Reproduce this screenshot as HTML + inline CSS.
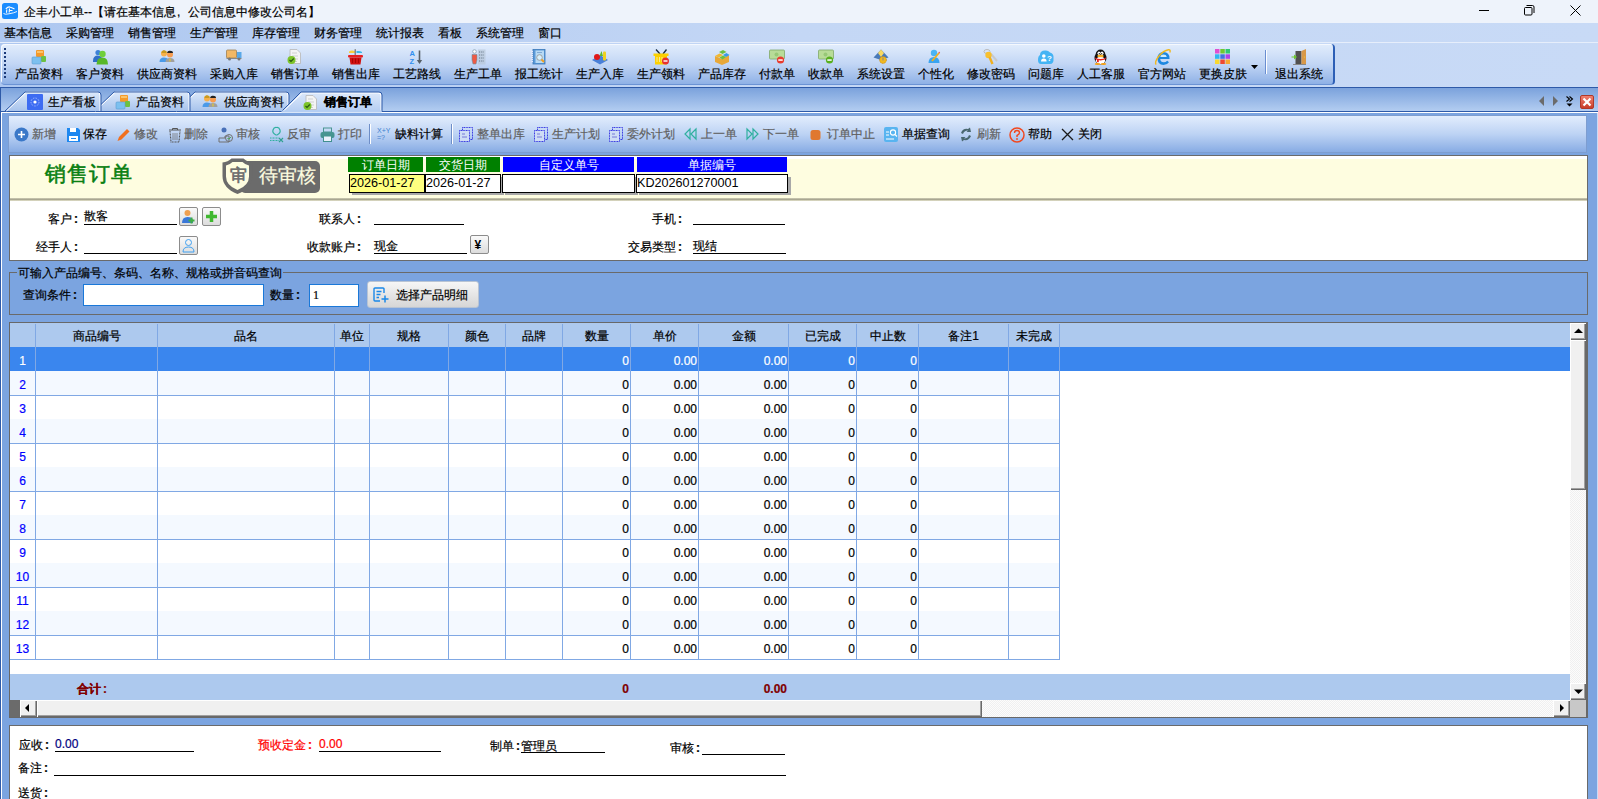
<!DOCTYPE html><html><head><meta charset="utf-8"><style>
*{margin:0;padding:0;box-sizing:border-box}
html,body{width:1598px;height:799px;overflow:hidden}
body{position:relative;background:#7ba4e0;font-family:"Liberation Sans",sans-serif;font-size:12px;line-height:14px;color:#000}
.a{position:absolute}
.t{position:absolute;white-space:nowrap;line-height:14px;-webkit-text-stroke:0.2px currentColor}
.c{display:inline-block;width:12px;padding-left:2px;font-weight:bold;text-align:left}
.cm{display:inline-block;width:12px;padding-left:1px;text-align:left}
.gray{color:#5f5f5f}
svg{position:absolute;overflow:visible}
</style></head><body>
<div class="a" style="left:0;top:0;width:1598px;height:23px;background:#eef3fb"></div>
<div class="a" style="left:2px;top:3px;width:16px;height:16px;background:#1a8cff;border-radius:2.5px"></div>
<svg style="left:2px;top:3px" width="16" height="16"><path d="M3.8 5.8 Q6.5 3.2 8.3 4.2 Q10.5 5 12.5 6" stroke="#fff" stroke-width="1.1" fill="none"/><path d="M4.8 6.5 L4.5 9.8 M7.5 5.5 L7.2 9.5 M8 7.5 H10.5" stroke="#fff" stroke-width="1.1" fill="none"/><path d="M1.5 10.5 Q3 11.8 7 10.8 Q12 10 15 8.5" stroke="#fff" stroke-width="0.9" fill="none"/></svg>
<div class="t " style="left:24px;top:5px;">企丰小工单--【请在基本信息<span class="cm">,</span>公司信息中修改公司名】</div>
<div class="a" style="left:1479px;top:10px;width:10px;height:1px;background:#000"></div>
<svg style="left:1524px;top:5px" width="11" height="11"><rect x="0.5" y="2.5" width="7.5" height="7.5" rx="1" fill="none" stroke="#000" stroke-width="1"/><path d="M2.5 0.5h6a1.5 1.5 0 0 1 1.5 1.5v6" fill="none" stroke="#000" stroke-width="1"/></svg>
<svg style="left:1570px;top:5px" width="11" height="11"><path d="M0.5 0.5L10.5 10.5M10.5 0.5L0.5 10.5" stroke="#000" stroke-width="1"/></svg>
<div class="a" style="left:0;top:23px;width:1598px;height:19px;background:linear-gradient(90deg,#adc7f0,#c4d7f5 50%,#c8daf6)"></div>
<div class="a" style="left:0;top:42px;width:1598px;height:1px;background:#e6eefb"></div>
<div class="t " style="left:4px;top:26px;">基本信息</div>
<div class="t " style="left:66px;top:26px;">采购管理</div>
<div class="t " style="left:128px;top:26px;">销售管理</div>
<div class="t " style="left:190px;top:26px;">生产管理</div>
<div class="t " style="left:252px;top:26px;">库存管理</div>
<div class="t " style="left:314px;top:26px;">财务管理</div>
<div class="t " style="left:376px;top:26px;">统计报表</div>
<div class="t " style="left:438px;top:26px;">看板</div>
<div class="t " style="left:476px;top:26px;">系统管理</div>
<div class="t " style="left:538px;top:26px;">窗口</div>
<div class="a" style="left:0;top:43px;width:1598px;height:44px;background:linear-gradient(90deg,#adc7f0,#c4d7f5 50%,#c8daf6)"></div>
<div class="a" style="left:1px;top:44px;width:1334px;height:41px;border-radius:4px 4px 4px 4px;background:linear-gradient(#e2edfc,#c2d6f5 50%,#8fb1e6);border-right:2px solid #2d5fb6;border-bottom:1px solid #6b93d4;box-shadow:inset 1px 1px 0 #f4f8fe"></div>
<div class="a" style="left:4px;top:48px;width:2px;height:2px;background:#1b3a78"></div>
<div class="a" style="left:4px;top:52px;width:2px;height:2px;background:#1b3a78"></div>
<div class="a" style="left:4px;top:56px;width:2px;height:2px;background:#1b3a78"></div>
<div class="a" style="left:4px;top:60px;width:2px;height:2px;background:#1b3a78"></div>
<div class="a" style="left:4px;top:64px;width:2px;height:2px;background:#1b3a78"></div>
<div class="a" style="left:4px;top:68px;width:2px;height:2px;background:#1b3a78"></div>
<div class="a" style="left:4px;top:72px;width:2px;height:2px;background:#1b3a78"></div>
<div class="a" style="left:4px;top:76px;width:2px;height:2px;background:#1b3a78"></div>
<svg style="left:31px;top:49px" width="16" height="16" viewBox="0 0 16 16"><rect x="5" y="1" width="8" height="7" rx="1" fill="#f59a2a"/><rect x="6" y="2" width="6" height="2" fill="#fbc46a"/><rect x="10" y="7" width="5" height="6" rx="1" fill="#6cc142"/><rect x="1" y="8" width="9" height="7" rx="1" fill="#7cc0ef" stroke="#5a9cd0" stroke-width="0.6"/></svg>
<div class="t " style="left:15px;top:67px;">产品资料</div>
<svg style="left:92px;top:49px" width="16" height="16" viewBox="0 0 16 16"><circle cx="6" cy="3.5" r="2.6" fill="#3c82d8"/><path d="M1 12 Q1 6.5 6 6.5 Q9 6.5 10 9 L9 13 L1 13Z" fill="#3070c8"/><circle cx="10.5" cy="5" r="3.2" fill="#6fcf3a"/><path d="M4.5 15.5 Q4.5 8.5 10.5 8.5 Q16 8.5 16 15.5Z" fill="#58b828"/></svg>
<div class="t " style="left:76px;top:67px;">客户资料</div>
<svg style="left:159px;top:49px" width="16" height="16" viewBox="0 0 16 16"><circle cx="5" cy="4.5" r="3" fill="#f7b04a"/><path d="M4 1.5 Q5 0.5 7.5 2.5 L7.5 4 L2.5 4 Q2.3 2 4 1.5Z" fill="#c89a20"/><path d="M0.5 13 Q0.5 8.5 5 8.5 Q8 8.5 9 10 L9 13Z" fill="#4a9ae8"/><circle cx="11" cy="5.5" r="3" fill="#f79c50"/><path d="M8 4 Q8.5 1.5 11 1.8 Q14 1.8 14 4Z" fill="#222"/><path d="M6.5 13 Q6.5 9 11 9 Q15.5 9 15.5 13Z" fill="#a0a0a0"/><rect x="10.5" y="9.5" width="1" height="3" fill="#f0d020"/></svg>
<div class="t " style="left:137px;top:67px;">供应商资料</div>
<svg style="left:226px;top:49px" width="16" height="16" viewBox="0 0 16 16"><rect x="0.5" y="1" width="10" height="8" rx="1" fill="#f2b866" stroke="#a08050" stroke-width="0.8"/><rect x="11" y="3" width="4.5" height="6" fill="#59a8e8"/><rect x="0.5" y="9" width="15" height="1" fill="#888"/><circle cx="3.5" cy="10" r="1.5" fill="#777"/><circle cx="13" cy="10" r="1.5" fill="#777"/></svg>
<div class="t " style="left:210px;top:67px;">采购入库</div>
<svg style="left:287px;top:49px" width="16" height="16" viewBox="0 0 16 16"><path d="M3 0.5 H10 L13.5 4 V14.5 H3Z" fill="#f4f4f4" stroke="#b8b8b8" stroke-width="0.8"/><path d="M5 4h5M5 7h6M5 10h6M5 12.5h5" stroke="#c8c8c8" stroke-width="0.8"/><circle cx="4.5" cy="11" r="4" fill="#7cc42a"/><path d="M2.5 11 L4 12.5 L6.8 9.5" stroke="#2a5a10" stroke-width="1.2" fill="none"/></svg>
<div class="t " style="left:271px;top:67px;">销售订单</div>
<svg style="left:348px;top:49px" width="16" height="16" viewBox="0 0 16 16"><path d="M1 2.5 Q3 1 7 2 L7 4 L1 4Z" fill="#f7d040"/><path d="M8.5 2 Q12 1.5 14 3 L14 4 L8.5 4Z" fill="#38b8e8"/><rect x="6.5" y="0" width="1.5" height="7" rx="0.7" fill="#888"/><rect x="0" y="6" width="15" height="2.5" rx="1" fill="#e82020"/><path d="M1.5 8.5 H13.5 L12.5 15.5 H2.5Z" fill="#d01010"/><path d="M4.5 9.5v4.5M7.5 9.5v4.5M10.5 9.5v4.5" stroke="#a00000" stroke-width="0.8"/></svg>
<div class="t " style="left:332px;top:67px;">销售出库</div>
<svg style="left:409px;top:49px" width="16" height="16" viewBox="0 0 16 16"><text x="0.5" y="7" font-family="Liberation Sans" font-weight="bold" font-size="7.5" fill="#2f8ff0">A</text><text x="0.5" y="15" font-family="Liberation Sans" font-weight="bold" font-size="7.5" fill="#2f8ff0">Z</text><path d="M10.5 1.5 V13" stroke="#555f66" stroke-width="1.6"/><path d="M7.8 11 L10.5 15 L13.2 11Z" fill="#555f66"/></svg>
<div class="t " style="left:393px;top:67px;">工艺路线</div>
<svg style="left:470px;top:49px" width="16" height="16" viewBox="0 0 16 16"><circle cx="4.5" cy="2.5" r="1.8" fill="#fff" stroke="#8aa0b0" stroke-width="0.8"/><path d="M2 5.5 H7 V11 L6 15 H3 L2 11Z" fill="#ee5a44" stroke="#7090a0" stroke-width="0.6"/><rect x="8" y="0.5" width="7.5" height="15" fill="#b8c8d8" opacity="0.7"/><path d="M9 3h5M9 6h5M9 9h5M9 12h5" stroke="#405060" stroke-width="0.7" stroke-dasharray="1.2 1"/></svg>
<div class="t " style="left:454px;top:67px;">生产工单</div>
<svg style="left:531px;top:49px" width="16" height="16" viewBox="0 0 16 16"><rect x="2" y="0.5" width="12" height="14.5" fill="#5c9ad8" stroke="#3a78b8" stroke-width="0.8"/><rect x="4.5" y="1.5" width="8.5" height="12.5" fill="#b8daf4"/><path d="M1.2 2v11" stroke="#eef" stroke-width="1.4" stroke-dasharray="1 1"/><path d="M6 3.5h5" stroke="#5c8ac0" stroke-width="0.6"/><circle cx="8.5" cy="8.5" r="2.8" fill="#d8f0fc" stroke="#9a9a9a" stroke-width="0.9"/><path d="M10.5 10.5 L13 13" stroke="#f0a020" stroke-width="2"/></svg>
<div class="t " style="left:515px;top:67px;">报工统计</div>
<svg style="left:592px;top:49px" width="16" height="16" viewBox="0 0 16 16"><path d="M0 11 L8 6 L16 11 L8 15.5Z" fill="#4a80d8"/><circle cx="5" cy="8" r="3" fill="#e01818"/><path d="M7.5 7 L9.5 2 L11 7Z" fill="#5ab830"/><rect x="11" y="2.5" width="3" height="9" rx="1" fill="#f0d020"/></svg>
<div class="t " style="left:576px;top:67px;">生产入库</div>
<svg style="left:653px;top:49px" width="16" height="16" viewBox="0 0 16 16"><path d="M3 0.5 L7 5 M13.5 0.5 L10 5" stroke="#1a2a3a" stroke-width="1.3"/><rect x="0.5" y="4.5" width="15" height="2.5" fill="#fcd000"/><rect x="2" y="7" width="12" height="8.5" fill="#fcd000"/><path d="M4 8v5M6.5 8v5M9 8v5" stroke="#fff" stroke-width="0.8" opacity="0.7"/><circle cx="12.5" cy="12" r="3.5" fill="#e83030"/><rect x="10.5" y="11.3" width="4" height="1.4" fill="#fff"/></svg>
<div class="t " style="left:637px;top:67px;">生产领料</div>
<svg style="left:714px;top:49px" width="16" height="16" viewBox="0 0 16 16"><path d="M1 7 L8 10 L15 6 V13 L8 16 L1 13Z" fill="#e8a838"/><path d="M1 7 L5.5 4.5 L9 6 L5 8.5Z" fill="#f2b830"/><path d="M5 3 L9 1 L12.5 3 L8.5 5Z" fill="#6cc040"/><path d="M9 6 L12.5 4 L15.5 6 L12 8Z" fill="#3a9ae8"/><path d="M5.5 8.5 L9 6.5 L12 8 L8.5 10.5Z" fill="#6cc040"/></svg>
<div class="t " style="left:698px;top:67px;">产品库存</div>
<svg style="left:769px;top:49px" width="16" height="16" viewBox="0 0 16 16"><rect x="0.5" y="1" width="15" height="9" rx="1" fill="#b8dc98" stroke="#80a868" stroke-width="0.8"/><circle cx="7.5" cy="5.5" r="2" fill="#98c878"/><circle cx="11.5" cy="11" r="3.6" fill="#e83c30"/><rect x="9.3" y="10.3" width="4.4" height="1.5" fill="#fff"/></svg>
<div class="t " style="left:759px;top:67px;">付款单</div>
<svg style="left:818px;top:49px" width="16" height="16" viewBox="0 0 16 16"><rect x="0.5" y="1" width="15" height="9" rx="1" fill="#b8dc98" stroke="#80a868" stroke-width="0.8"/><circle cx="7.5" cy="5.5" r="2" fill="#98c878"/><circle cx="11.5" cy="11" r="3.6" fill="#58b020"/><rect x="9.3" y="10.3" width="4.4" height="1.5" fill="#fff"/></svg>
<div class="t " style="left:808px;top:67px;">收款单</div>
<svg style="left:873px;top:49px" width="16" height="16" viewBox="0 0 16 16"><path d="M8 0.5 L15.5 8.5 L8 11 L0.5 8.5Z" fill="#4a7ab8"/><path d="M8 0.5 L11 4 L8 8 L5 4Z" fill="#f8d860"/><circle cx="10" cy="11" r="3.4" fill="#f0b820" stroke="#c08010" stroke-width="0.8" stroke-dasharray="1 0.8"/><rect x="9.5" y="8.5" width="1" height="3" fill="#888"/></svg>
<div class="t " style="left:857px;top:67px;">系统设置</div>
<svg style="left:928px;top:49px" width="16" height="16" viewBox="0 0 16 16"><circle cx="6" cy="4" r="3.2" fill="#4ab4f4"/><path d="M0.5 14 Q0.5 8 6 8 Q11.5 8 11.5 14Z" fill="#3aa4f0"/><path d="M4 12 L11 4" stroke="#f0b020" stroke-width="1.8"/><circle cx="11.3" cy="3.6" r="0.8" fill="#f06060"/></svg>
<div class="t " style="left:918px;top:67px;">个性化</div>
<svg style="left:983px;top:49px" width="16" height="16" viewBox="0 0 16 16"><ellipse cx="4" cy="2.5" rx="3" ry="2" fill="none" stroke="#bbb" stroke-width="1"/><path d="M8 5 L14 12" stroke="#c8c8c8" stroke-width="2"/><circle cx="5.5" cy="6" r="3.2" fill="#f7c030"/><path d="M6.5 8 L9.5 15" stroke="#f0b020" stroke-width="2.4"/></svg>
<div class="t " style="left:967px;top:67px;">修改密码</div>
<svg style="left:1038px;top:49px" width="16" height="16" viewBox="0 0 16 16"><path d="M3 15 Q0 15 0 11 Q0 7 2 6 Q2 1.5 7 1.5 Q10 1 12 3.5 Q16 4.5 15.5 9 Q16 15 12 15Z" fill="#44b4f4"/><circle cx="5.8" cy="7" r="1.8" fill="#fff"/><path d="M3 12.5 Q3 9.5 5.8 9.5 Q8.6 9.5 8.6 12.5Z" fill="#fff"/><text x="9" y="12" font-family="Liberation Sans" font-weight="bold" font-size="8" fill="#fff">?</text></svg>
<div class="t " style="left:1028px;top:67px;">问题库</div>
<svg style="left:1093px;top:49px" width="16" height="16" viewBox="0 0 16 16"><ellipse cx="7.5" cy="9" rx="6" ry="6.5" fill="#111"/><ellipse cx="7.5" cy="5.5" rx="4.8" ry="5" fill="#111"/><ellipse cx="7.5" cy="11.5" rx="4.6" ry="3.8" fill="#fff"/><ellipse cx="6" cy="4.3" rx="1.5" ry="1.8" fill="#fff"/><ellipse cx="9" cy="4.3" rx="1.5" ry="1.8" fill="#fff"/><circle cx="6.3" cy="4.6" r="0.6" fill="#000"/><circle cx="8.7" cy="4.6" r="0.6" fill="#000"/><ellipse cx="7.5" cy="7" rx="3.2" ry="1.3" fill="#f8b020"/><path d="M2 8.5 Q7.5 11.5 13 8.5 L12.6 10.3 Q7.5 12.5 2.4 10.3Z" fill="#e82020"/><rect x="4" y="10" width="1.8" height="3.2" fill="#e82020"/><ellipse cx="4.5" cy="15" rx="2.8" ry="1.1" fill="#f8a010"/><ellipse cx="10.5" cy="15" rx="2.8" ry="1.1" fill="#f8a010"/></svg>
<div class="t " style="left:1077px;top:67px;">人工客服</div>
<svg style="left:1154px;top:49px" width="16" height="16" viewBox="0 0 16 16"><path d="M15.5 10 H6.2 Q6.6 13.3 9.6 13.3 Q11.8 13.3 13.2 11.8 L15 13.2 Q13 16 9.5 16 Q3.5 16 3.5 9.5 Q3.5 3 9.5 3 Q15.5 3 15.5 9.5Z" fill="#1e88e0"/><path d="M6.2 8 Q6.8 5.6 9.5 5.6 Q12.3 5.6 12.8 8Z" fill="#d0ecfc"/><path d="M2.3 15.5 Q0 14 4.5 7.5 Q9.5 1.5 14.5 0.8 Q17 0.6 15.8 3.5" stroke="#f0b820" stroke-width="1.4" fill="none"/></svg>
<div class="t " style="left:1138px;top:67px;">官方网站</div>
<svg style="left:1215px;top:49px" width="16" height="16" viewBox="0 0 16 16"><rect x="0" y="0" width="4.5" height="4.5" fill="#e050d0"/><rect x="5.3" y="0" width="4.5" height="4.5" fill="#70c830"/><rect x="10.5" y="0" width="4.5" height="4.5" fill="#30c870"/><rect x="0" y="5.3" width="4.5" height="4.5" fill="#30b8f0"/><rect x="5.3" y="5.3" width="4.5" height="4.5" fill="#4070e0"/><rect x="10.5" y="5.3" width="4.5" height="4.5" fill="#b040e8"/><rect x="0" y="10.5" width="4.5" height="4.5" fill="#f8d830"/><rect x="5.3" y="10.5" width="4.5" height="4.5" fill="#f04830"/><rect x="10.5" y="10.5" width="4.5" height="4.5" fill="#f8a830"/></svg>
<div class="t " style="left:1199px;top:67px;">更换皮肤</div>
<svg style="left:1251px;top:65px" width="7" height="4"><path d="M0 0H7L3.5 4Z" fill="#000"/></svg>
<div class="a" style="left:1265px;top:50px;width:1px;height:24px;background:#6a8ed0"></div>
<div class="a" style="left:1266px;top:50px;width:1px;height:24px;background:#fff"></div>
<svg style="left:1291px;top:49px" width="16" height="16" viewBox="0 0 16 16"><rect x="4.5" y="2" width="6" height="13" fill="#505050"/><path d="M10.5 2 L15 0 V15 L10.5 15Z" fill="#d89848"/><circle cx="13.5" cy="8" r="0.6" fill="#f8d020"/><path d="M0.5 7.5 H3 V5.5 L6 8 L3 10.5 V8.5 H0.5Z" fill="#6cc830"/><rect x="2" y="15" width="13" height="1" fill="#888"/></svg>
<div class="t " style="left:1275px;top:67px;">退出系统</div>
<div class="a" style="left:0;top:87px;width:1598px;height:1px;background:#2e5aa8"></div>
<div class="a" style="left:0;top:88px;width:1598px;height:23px;background:linear-gradient(#7ba2dc,#b3cdf1)"></div>
<div class="a" style="left:0;top:111px;width:1598px;height:1px;background:#2e5aa8"></div>
<div class="a" style="left:0;top:112px;width:1598px;height:1px;background:#fff"></div>
<svg style="left:0;top:0" width="1598" height="114" viewBox="0 0 1598 114"><defs><linearGradient id="tg" x1="0" y1="0" x2="0" y2="1"><stop offset="0" stop-color="#dbe8fa"/><stop offset="1" stop-color="#a7c3ec"/></linearGradient><linearGradient id="tga" x1="0" y1="0" x2="0" y2="1"><stop offset="0" stop-color="#dde9fb"/><stop offset="1" stop-color="#b4cdf2"/></linearGradient></defs><path d="M175 111 L195 92 L286 92 Q289 92 289 95 L289 111Z" fill="url(#tg)"/><path d="M176.5 111 L196.5 92 L285 92 Q288 92 288 95 L288 111" fill="none" stroke="#fff" stroke-width="1"/><path d="M175 111 L195 92 L286 92 Q289 92 289 95 L289 111" fill="none" stroke="#2e5aa8" stroke-width="1"/><path d="M94 111 L114 92 L187 92 Q190 92 190 95 L190 111Z" fill="url(#tg)"/><path d="M95.5 111 L115.5 92 L186 92 Q189 92 189 95 L189 111" fill="none" stroke="#fff" stroke-width="1"/><path d="M94 111 L114 92 L187 92 Q190 92 190 95 L190 111" fill="none" stroke="#2e5aa8" stroke-width="1"/><path d="M5 111 L25 92 L98 92 Q101 92 101 95 L101 111Z" fill="url(#tg)"/><path d="M6.5 111 L26.5 92 L97 92 Q100 92 100 95 L100 111" fill="none" stroke="#fff" stroke-width="1"/><path d="M5 111 L25 92 L98 92 Q101 92 101 95 L101 111" fill="none" stroke="#2e5aa8" stroke-width="1"/><path d="M281 112 L301 92 L379 92 Q382 92 382 95 L382 112Z" fill="url(#tga)"/><path d="M282.5 112 L302.5 93 L378 93 Q381 93 381 96 L381 112" fill="none" stroke="#fff" stroke-width="1"/><path d="M281 112 L301 92 L379 92 Q382 92 382 95 L382 112" fill="none" stroke="#2e5aa8" stroke-width="1"/><rect x="281.5" y="110.5" width="100" height="2" fill="#b4cdf2"/></svg>
<div class="a" style="left:27px;top:94px;width:16px;height:16px;background:#3d6cf2;border-radius:1px"></div>
<svg style="left:27px;top:94px" width="16" height="16" viewBox="0 0 16 16"><circle cx="8" cy="8" r="1.6" fill="#fff"/><circle cx="8" cy="8" r="4" fill="none" stroke="#9fb8ff" stroke-width="1" stroke-dasharray="1.5 1.2"/></svg>
<div class="t " style="left:48px;top:95px;">生产看板</div>
<svg style="left:115px;top:94px" width="16" height="16" viewBox="0 0 16 16"><rect x="5" y="1" width="8" height="7" rx="1" fill="#f59a2a"/><rect x="6" y="2" width="6" height="2" fill="#fbc46a"/><rect x="10" y="7" width="5" height="6" rx="1" fill="#6cc142"/><rect x="1" y="8" width="9" height="7" rx="1" fill="#7cc0ef" stroke="#5a9cd0" stroke-width="0.6"/></svg>
<div class="t " style="left:136px;top:95px;">产品资料</div>
<svg style="left:202px;top:94px" width="16" height="16" viewBox="0 0 16 16"><circle cx="5" cy="4.5" r="3" fill="#f7b04a"/><path d="M4 1.5 Q5 0.5 7.5 2.5 L7.5 4 L2.5 4 Q2.3 2 4 1.5Z" fill="#c89a20"/><path d="M0.5 13 Q0.5 8.5 5 8.5 Q8 8.5 9 10 L9 13Z" fill="#4a9ae8"/><circle cx="11" cy="5.5" r="3" fill="#f79c50"/><path d="M8 4 Q8.5 1.5 11 1.8 Q14 1.8 14 4Z" fill="#222"/><path d="M6.5 13 Q6.5 9 11 9 Q15.5 9 15.5 13Z" fill="#a0a0a0"/><rect x="10.5" y="9.5" width="1" height="3" fill="#f0d020"/></svg>
<div class="t " style="left:224px;top:95px;">供应商资料</div>
<svg style="left:303px;top:95px" width="16" height="16" viewBox="0 0 16 16"><path d="M3 0.5 H10 L13.5 4 V14.5 H3Z" fill="#f4f4f4" stroke="#b8b8b8" stroke-width="0.8"/><path d="M5 4h5M5 7h6M5 10h6M5 12.5h5" stroke="#c8c8c8" stroke-width="0.8"/><circle cx="4.5" cy="11" r="4" fill="#7cc42a"/><path d="M2.5 11 L4 12.5 L6.8 9.5" stroke="#2a5a10" stroke-width="1.2" fill="none"/></svg>
<div class="t " style="left:324px;top:95px;font-weight:bold">销售订单</div>
<svg style="left:1539px;top:96px" width="6" height="11" viewBox="0 0 6 11"><path d="M5 0 L0 5 L5 10Z" fill="#6b6b6b"/></svg>
<svg style="left:1553px;top:96px" width="6" height="11" viewBox="0 0 6 11"><path d="M0 0 L5 5 L0 10Z" fill="#6b6b6b"/></svg>
<svg style="left:1566px;top:96px" width="8" height="12" viewBox="0 0 8 12"><path d="M0.5 0.5 L3.5 3 L0.5 5.5 M3.5 0.5 L6.5 3 L3.5 5.5" stroke="#000" stroke-width="1.1" fill="none"/><path d="M0.5 7.5 H6.5 L3.5 10.5Z" fill="#000"/></svg>
<div class="a" style="left:1580px;top:95px;width:14px;height:14px;background:linear-gradient(#f08070,#c83c28);border:1px solid #b03828;border-radius:2px"></div>
<svg style="left:1580px;top:95px" width="14" height="14" viewBox="0 0 14 14"><path d="M3.5 3.5 L10.5 10.5 M10.5 3.5 L3.5 10.5" stroke="#fff" stroke-width="2.2"/></svg>
<div class="a" style="left:0;top:87px;width:1px;height:712px;background:#2e5aa8"></div>
<div class="a" style="left:1px;top:113px;width:1px;height:686px;background:#fff"></div>
<div class="a" style="left:1597px;top:113px;width:1px;height:686px;background:#c8daf5"></div>
<div class="a" style="left:8px;top:115px;width:1579px;height:38px;background:linear-gradient(#e2edfd,#bdd3f4 50%,#88ace4);border:1px solid #7d9dd0"></div>
<svg style="left:14px;top:127px" width="16" height="16" viewBox="0 0 16 16"><circle cx="7.5" cy="7.5" r="7" fill="#3a78c8"/><path d="M7.5 4v7M4 7.5h7" stroke="#fff" stroke-width="1.6"/></svg>
<div class="t gray" style="left:32px;top:127px;">新增</div>
<svg style="left:66px;top:127px" width="16" height="16" viewBox="0 0 16 16"><path d="M1 1 H12 L14 3 V15 H1Z" fill="#1e88f0"/><rect x="4" y="1" width="6" height="4" fill="#fff"/><rect x="3" y="9" width="9" height="5" fill="#fff"/><rect x="5" y="11" width="5" height="1" fill="#1e88f0"/></svg>
<div class="t " style="left:83px;top:127px;">保存</div>
<svg style="left:116px;top:127px" width="16" height="16" viewBox="0 0 16 16"><path d="M1.5 14 L3 10 L11 2 L13.5 4.5 L5.5 12.5Z" fill="#f07020"/></svg>
<div class="t gray" style="left:134px;top:127px;">修改</div>
<svg style="left:167px;top:127px" width="16" height="16" viewBox="0 0 16 16"><path d="M2 3h12M5.5 3V1.5h5V3" stroke="#555" stroke-width="1" fill="none"/><path d="M3 4 L4 15 H12 L13 4" stroke="#555" stroke-width="1.1" fill="none" stroke-dasharray="1 0.5"/><path d="M6 6v7M8 6v7M10 6v7" stroke="#777" stroke-width="0.8"/></svg>
<div class="t gray" style="left:184px;top:127px;">删除</div>
<svg style="left:218px;top:127px" width="16" height="16" viewBox="0 0 16 16"><circle cx="6" cy="3" r="2.5" fill="#4870b8"/><path d="M1 11 H7 V9 H11 V15 H1Z" fill="none" stroke="#707070" stroke-width="1"/><circle cx="11" cy="11" r="3.5" fill="none" stroke="#707070" stroke-width="1"/><path d="M9.5 11 L10.7 12.2 L12.8 10" stroke="#40a040" stroke-width="1" fill="none"/></svg>
<div class="t gray" style="left:236px;top:127px;">审核</div>
<svg style="left:269px;top:127px" width="16" height="16" viewBox="0 0 16 16"><path d="M7 8 Q3 6 4 3 Q5 0 7.5 0.5 Q10 0 11 3 Q12 6 8 8Z" fill="none" stroke="#30b0a0" stroke-width="1.2"/><path d="M1 11h9M1 13.5h9" stroke="#30b0a0" stroke-width="1" stroke-dasharray="1 0.5"/><path d="M10 11 L14 15 M14 11 L10 15" stroke="#30a090" stroke-width="1.1"/></svg>
<div class="t gray" style="left:287px;top:127px;">反审</div>
<svg style="left:320px;top:127px" width="16" height="16" viewBox="0 0 16 16"><g opacity="0.75"><rect x="3.5" y="1" width="8" height="4" fill="none" stroke="#208070" stroke-width="1"/><rect x="0.5" y="5" width="14" height="6" rx="2" fill="#208070"/><rect x="3.5" y="9" width="8" height="5.5" fill="#fff" stroke="#208070" stroke-width="1"/></g></svg>
<div class="t gray" style="left:338px;top:127px;">打印</div>
<svg style="left:377px;top:127px" width="16" height="16" viewBox="0 0 16 16"><text x="0" y="6" font-family="Liberation Sans" font-size="7" fill="#4080d0">X+Y</text><text x="0" y="13" font-family="Liberation Sans" font-size="7" fill="#4080d0">=?</text></svg>
<div class="t " style="left:395px;top:127px;">缺料计算</div>
<svg style="left:459px;top:127px" width="16" height="16" viewBox="0 0 16 16"><rect x="3.5" y="0.5" width="10" height="12" fill="none" stroke="#3030e0" stroke-width="1" stroke-dasharray="1 0.6"/><rect x="0.5" y="3.5" width="10" height="11" fill="#cfdcf5" stroke="#3030e0" stroke-width="1" stroke-dasharray="1 0.6"/><path d="M3 7h3M3 10h5" stroke="#6060d0" stroke-width="0.8"/></svg>
<div class="t gray" style="left:477px;top:127px;">整单出库</div>
<svg style="left:534px;top:127px" width="16" height="16" viewBox="0 0 16 16"><rect x="3.5" y="0.5" width="10" height="12" fill="none" stroke="#3030e0" stroke-width="1" stroke-dasharray="1 0.6"/><rect x="0.5" y="3.5" width="10" height="11" fill="#cfdcf5" stroke="#3030e0" stroke-width="1" stroke-dasharray="1 0.6"/><path d="M3 7h3M3 10h5" stroke="#6060d0" stroke-width="0.8"/></svg>
<div class="t gray" style="left:552px;top:127px;">生产计划</div>
<svg style="left:609px;top:127px" width="16" height="16" viewBox="0 0 16 16"><rect x="3.5" y="0.5" width="10" height="12" fill="none" stroke="#3030e0" stroke-width="1" stroke-dasharray="1 0.6"/><rect x="0.5" y="3.5" width="10" height="11" fill="#cfdcf5" stroke="#3030e0" stroke-width="1" stroke-dasharray="1 0.6"/><path d="M3 7h3M3 10h5" stroke="#6060d0" stroke-width="0.8"/></svg>
<div class="t gray" style="left:627px;top:127px;">委外计划</div>
<svg style="left:684px;top:127px" width="16" height="16" viewBox="0 0 16 16"><path d="M6 2 L1 7 L6 12Z M12 2 L7 7 L12 12Z" fill="none" stroke="#30b0a0" stroke-width="1.2"/></svg>
<div class="t gray" style="left:701px;top:127px;">上一单</div>
<svg style="left:746px;top:127px" width="16" height="16" viewBox="0 0 16 16"><path d="M1 2 L6 7 L1 12Z M7 2 L12 7 L7 12Z" fill="none" stroke="#30b0a0" stroke-width="1.2"/></svg>
<div class="t gray" style="left:763px;top:127px;">下一单</div>
<svg style="left:810px;top:127px" width="16" height="16" viewBox="0 0 16 16"><rect x="0.5" y="3" width="10" height="10" rx="2.5" fill="#e07830"/></svg>
<div class="t gray" style="left:827px;top:127px;">订单中止</div>
<svg style="left:884px;top:127px" width="16" height="16" viewBox="0 0 16 16"><rect x="0" y="0" width="14" height="15" rx="2" fill="#58b4f0"/><path d="M2 5h3M2 8h3M2 12h8" stroke="#fff" stroke-width="1"/><circle cx="9" cy="5.5" r="2.6" fill="none" stroke="#fff" stroke-width="1.1"/><path d="M11 7.5 L13 9.5" stroke="#fff" stroke-width="1.1"/></svg>
<div class="t " style="left:902px;top:127px;">单据查询</div>
<svg style="left:959px;top:127px" width="16" height="16" viewBox="0 0 16 16"><path d="M2 6 Q4 1 9 2 L11 0.5 L12 5 L7.5 5 L9 3.5 Q5 3.5 4 7Z" fill="#4a6870"/><path d="M12 9 Q10 14 5 13 L3 14.5 L2 10 L6.5 10 L5 11.5 Q9 11.5 10 8Z" fill="#4a6870"/></svg>
<div class="t gray" style="left:977px;top:127px;">刷新</div>
<svg style="left:1009px;top:127px" width="16" height="16" viewBox="0 0 16 16"><circle cx="8" cy="8" r="7" fill="none" stroke="#f04820" stroke-width="1.5"/><path d="M5.5 6 Q5.5 3.5 8 3.5 Q10.5 3.5 10.5 5.8 Q10.5 7.3 8 8.5 V10" stroke="#f04820" stroke-width="1.4" fill="none"/><circle cx="8" cy="12" r="0.9" fill="#f04820"/></svg>
<div class="t " style="left:1028px;top:127px;">帮助</div>
<svg style="left:1061px;top:128px" width="16" height="16" viewBox="0 0 16 16"><path d="M1 1 L12 12 M12 1 L1 12" stroke="#1a1a1a" stroke-width="1.3"/></svg>
<div class="t " style="left:1078px;top:127px;">关闭</div>
<div class="a" style="left:369px;top:124px;width:1px;height:20px;background:#6e8ec8"></div>
<div class="a" style="left:370px;top:124px;width:1px;height:20px;background:#fff"></div>
<div class="a" style="left:451px;top:124px;width:1px;height:20px;background:#6e8ec8"></div>
<div class="a" style="left:452px;top:124px;width:1px;height:20px;background:#fff"></div>
<div class="a" style="left:9px;top:155px;width:1579px;height:46px;background:#fefde0;border-top:1px solid #6a6a6a;border-left:1px solid #6a6a6a;border-right:1px solid #6a6a6a;box-shadow:inset 0 3px 0 #fff"></div>
<div class="a" style="left:10px;top:198px;width:1577px;height:3px;background:linear-gradient(#cfcdb6,#a9a791 50%,#e9e7cf)"></div>
<div class="t" style="left:45px;top:162px;font-size:21px;line-height:24px;color:#0a8010;letter-spacing:1px;-webkit-text-stroke:0.55px #0a8010;font-family:'Liberation Serif',serif">销售订单</div>
<div class="a" style="left:240px;top:161px;width:80px;height:32px;background:#6b6b6b;border-radius:5px"></div>
<svg style="left:222px;top:158px" width="32" height="37" viewBox="0 0 32 37"><path d="M9.5 0.5 H21.5 Q25 4 30.5 4.5 L30.5 18 Q30.5 30 15.5 36 Q0.5 30 0.5 18 L0.5 4.5 Q6 4 9.5 0.5Z" fill="#6b6b6b"/><path d="M10.5 4 H20.5 Q23.5 7 27 7.5 L27 18.5 Q27 27.5 15.5 32 Q4 27.5 4 18.5 L4 7.5 Q7.5 7 10.5 4Z" fill="#fefde0"/></svg>
<div class="t" style="left:230px;top:166px;font-size:17px;line-height:20px;color:#6b6b6b;-webkit-text-stroke:0.6px #6b6b6b">审</div>
<div class="t" style="left:259px;top:165px;font-size:18.5px;line-height:22px;color:#fefde0;-webkit-text-stroke:0.2px #fefde0">待审核</div>
<div class="a" style="left:348px;top:157px;width:75px;height:15px;background:#008000;color:#fff;text-align:center;line-height:16px;overflow:hidden">订单日期</div>
<div class="a" style="left:426px;top:157px;width:74px;height:15px;background:#008000;color:#fff;text-align:center;line-height:16px;overflow:hidden">交货日期</div>
<div class="a" style="left:503px;top:157px;width:131px;height:15px;background:#0000ff;color:#fff;text-align:center;line-height:16px;overflow:hidden">自定义单号</div>
<div class="a" style="left:637px;top:157px;width:150px;height:15px;background:#0000ff;color:#fff;text-align:center;line-height:16px;overflow:hidden">单据编号</div>
<div class="a" style="left:352px;top:177px;width:76px;height:18px;background:#a8a8a8"></div>
<div class="a" style="left:349px;top:174px;width:76px;height:19px;background:#ffff80;border:1px solid #000;line-height:17px;padding-left:0;font-size:12.6px">2026-01-27</div>
<div class="a" style="left:428px;top:177px;width:76px;height:18px;background:#a8a8a8"></div>
<div class="a" style="left:425px;top:174px;width:76px;height:19px;background:#fff;border:1px solid #000;line-height:17px;padding-left:0;font-size:12.6px">2026-01-27</div>
<div class="a" style="left:505px;top:177px;width:133px;height:18px;background:#a8a8a8"></div>
<div class="a" style="left:502px;top:174px;width:133px;height:19px;background:#fff;border:1px solid #000;line-height:17px;padding-left:0;font-size:12.6px"></div>
<div class="a" style="left:639px;top:177px;width:152px;height:18px;background:#a8a8a8"></div>
<div class="a" style="left:636px;top:174px;width:152px;height:19px;background:#fff;border:1px solid #000;line-height:17px;padding-left:0;font-size:12.6px">KD202601270001</div>
<div class="a" style="left:9px;top:201px;width:1579px;height:60px;background:#fff;border:1px solid #6a6a6a;border-top:none"></div>
<div class="t" style="left:-216px;width:300px;text-align:right;top:212px;">客户<span class="c">:</span></div>
<div class="t" style="left:-216px;width:300px;text-align:right;top:240px;">经手人<span class="c">:</span></div>
<div class="t" style="left:67px;width:300px;text-align:right;top:212px;">联系人<span class="c">:</span></div>
<div class="t" style="left:67px;width:300px;text-align:right;top:240px;">收款账户<span class="c">:</span></div>
<div class="t" style="left:388px;width:300px;text-align:right;top:212px;">手机<span class="c">:</span></div>
<div class="t" style="left:388px;width:300px;text-align:right;top:240px;">交易类型<span class="c">:</span></div>
<div class="t " style="left:84px;top:209px;">散客</div>
<div class="t " style="left:374px;top:239px;">现金</div>
<div class="t " style="left:693px;top:239px;">现结</div>
<div class="a" style="left:84px;top:224px;width:93px;height:1px;background:#000"></div>
<div class="a" style="left:84px;top:253px;width:93px;height:1px;background:#000"></div>
<div class="a" style="left:374px;top:224px;width:90px;height:1px;background:#000"></div>
<div class="a" style="left:374px;top:253px;width:93px;height:1px;background:#000"></div>
<div class="a" style="left:693px;top:224px;width:92px;height:1px;background:#000"></div>
<div class="a" style="left:693px;top:253px;width:93px;height:1px;background:#000"></div>
<div class="a" style="left:179px;top:207px;width:19px;height:19px;background:linear-gradient(#fafafa,#dcdcdc);border:1px solid #8c8c8c;border-radius:2px"></div>
<svg style="left:181px;top:209px" width="15" height="15" viewBox="0 0 15 15"><circle cx="6.5" cy="4" r="3" fill="#f0a050"/><path d="M1 14 Q1 8 6.5 8 Q11 8 12 11 L12 14Z" fill="#3a78d8"/><path d="M10.5 8.5v6M7.5 11.5h6" stroke="#40b040" stroke-width="2"/></svg>
<div class="a" style="left:202px;top:207px;width:19px;height:19px;background:linear-gradient(#fafafa,#dcdcdc);border:1px solid #8c8c8c;border-radius:2px"></div>
<svg style="left:204px;top:209px" width="15" height="15" viewBox="0 0 15 15"><path d="M7.5 2v11M2 7.5h11" stroke="#40b830" stroke-width="3.5"/></svg>
<div class="a" style="left:179px;top:236px;width:19px;height:19px;background:linear-gradient(#fafafa,#dcdcdc);border:1px solid #8c8c8c;border-radius:2px"></div>
<svg style="left:181px;top:238px" width="15" height="15" viewBox="0 0 15 15"><circle cx="7.5" cy="4.5" r="3" fill="none" stroke="#40a0f0" stroke-width="1"/><path d="M2 14 Q2 9 7.5 9 Q13 9 13 14Z" fill="none" stroke="#40a0f0" stroke-width="1"/></svg>
<div class="a" style="left:470px;top:235px;width:19px;height:19px;background:linear-gradient(#fafafa,#dcdcdc);border:1px solid #8c8c8c;border-radius:2px"></div>
<svg style="left:472px;top:237px" width="15" height="15" viewBox="0 0 15 15"><text x="2.5" y="12" font-family="Liberation Sans" font-weight="bold" font-size="12" fill="#000">¥</text></svg>
<div class="a" style="left:9px;top:272px;width:1579px;height:43px;border:1px solid #6a6a6a"></div>
<div class="t" style="left:17px;top:266px;padding:0 1px;background:#7ba4e0">可输入产品编号、条码、名称、规格或拼音码查询</div>
<div class="t " style="left:23px;top:288px;">查询条件<span class="c">:</span></div>
<div class="t " style="left:270px;top:288px;">数量<span class="c">:</span></div>
<div class="a" style="left:83px;top:284px;width:181px;height:22px;background:#fff;border:1px solid #1a78d8"></div>
<div class="a" style="left:309px;top:284px;width:50px;height:23px;background:#fff;border:1px solid #1a78d8"></div>
<div class="t" style="left:313px;top:288px;font-family:'Liberation Serif',serif">1</div>
<div class="a" style="left:367px;top:281px;width:112px;height:27px;background:linear-gradient(#f6f6f6,#e6e6e6 50%,#d6d6d6);border:1px solid #b8c4d4;border-radius:3px"></div>
<svg style="left:373px;top:287px" width="16" height="16" viewBox="0 0 16 16"><path d="M11 6 V2 Q11 1 10 1 H2 Q1 1 1 2 V13 Q1 14 2 14 H7" fill="none" stroke="#1a88e8" stroke-width="1.4"/><path d="M3.5 4.5h5M3.5 7.5h4M3.5 10.5h2.5" stroke="#1a88e8" stroke-width="1.3"/><path d="M12 8.5v7M8.5 12h7" stroke="#1a88e8" stroke-width="1.5"/></svg>
<div class="t " style="left:396px;top:288px;">选择产品明细</div>
<div class="a" style="left:9px;top:322px;width:1579px;height:396px;background:#fff;border:1px solid #686868;border-right:2px solid #686868;border-bottom:1px solid #686868"></div>
<div class="a" style="left:10px;top:323px;width:1560px;height:24px;background:#adc9ee"></div>
<div class="t" style="left:36px;width:121px;text-align:center;top:329px">商品编号</div>
<div class="t" style="left:158px;width:176px;text-align:center;top:329px">品名</div>
<div class="t" style="left:335px;width:34px;text-align:center;top:329px">单位</div>
<div class="t" style="left:370px;width:78px;text-align:center;top:329px">规格</div>
<div class="t" style="left:449px;width:56px;text-align:center;top:329px">颜色</div>
<div class="t" style="left:506px;width:56px;text-align:center;top:329px">品牌</div>
<div class="t" style="left:563px;width:67px;text-align:center;top:329px">数量</div>
<div class="t" style="left:631px;width:67px;text-align:center;top:329px">单价</div>
<div class="t" style="left:699px;width:89px;text-align:center;top:329px">金额</div>
<div class="t" style="left:789px;width:67px;text-align:center;top:329px">已完成</div>
<div class="t" style="left:857px;width:61px;text-align:center;top:329px">中止数</div>
<div class="t" style="left:919px;width:89px;text-align:center;top:329px">备注1</div>
<div class="t" style="left:1009px;width:50px;text-align:center;top:329px">未完成</div>
<div class="a" style="left:10px;top:347px;width:1560px;height:24px;background:#3a86ee"></div>
<div class="a" style="left:10px;top:371px;width:1049px;height:1px;background:#80a8e4"></div>
<div class="t" style="left:10px;width:25px;text-align:center;top:354px;color:#fff">1</div>
<div class="t" style="left:562px;width:67px;text-align:right;top:354px;color:#fff">0</div>
<div class="t" style="left:630px;width:67px;text-align:right;top:354px;color:#fff">0.00</div>
<div class="t" style="left:698px;width:89px;text-align:right;top:354px;color:#fff">0.00</div>
<div class="t" style="left:788px;width:67px;text-align:right;top:354px;color:#fff">0</div>
<div class="t" style="left:856px;width:61px;text-align:right;top:354px;color:#fff">0</div>
<div class="a" style="left:10px;top:371px;width:1049px;height:24px;background:#f4f9ff"></div>
<div class="a" style="left:10px;top:395px;width:1049px;height:1px;background:#80a8e4"></div>
<div class="t" style="left:10px;width:25px;text-align:center;top:378px;color:#0000ff">2</div>
<div class="t" style="left:562px;width:67px;text-align:right;top:378px;color:#000">0</div>
<div class="t" style="left:630px;width:67px;text-align:right;top:378px;color:#000">0.00</div>
<div class="t" style="left:698px;width:89px;text-align:right;top:378px;color:#000">0.00</div>
<div class="t" style="left:788px;width:67px;text-align:right;top:378px;color:#000">0</div>
<div class="t" style="left:856px;width:61px;text-align:right;top:378px;color:#000">0</div>
<div class="a" style="left:10px;top:419px;width:1049px;height:1px;background:#80a8e4"></div>
<div class="t" style="left:10px;width:25px;text-align:center;top:402px;color:#0000ff">3</div>
<div class="t" style="left:562px;width:67px;text-align:right;top:402px;color:#000">0</div>
<div class="t" style="left:630px;width:67px;text-align:right;top:402px;color:#000">0.00</div>
<div class="t" style="left:698px;width:89px;text-align:right;top:402px;color:#000">0.00</div>
<div class="t" style="left:788px;width:67px;text-align:right;top:402px;color:#000">0</div>
<div class="t" style="left:856px;width:61px;text-align:right;top:402px;color:#000">0</div>
<div class="a" style="left:10px;top:419px;width:1049px;height:24px;background:#f4f9ff"></div>
<div class="a" style="left:10px;top:443px;width:1049px;height:1px;background:#80a8e4"></div>
<div class="t" style="left:10px;width:25px;text-align:center;top:426px;color:#0000ff">4</div>
<div class="t" style="left:562px;width:67px;text-align:right;top:426px;color:#000">0</div>
<div class="t" style="left:630px;width:67px;text-align:right;top:426px;color:#000">0.00</div>
<div class="t" style="left:698px;width:89px;text-align:right;top:426px;color:#000">0.00</div>
<div class="t" style="left:788px;width:67px;text-align:right;top:426px;color:#000">0</div>
<div class="t" style="left:856px;width:61px;text-align:right;top:426px;color:#000">0</div>
<div class="a" style="left:10px;top:467px;width:1049px;height:1px;background:#80a8e4"></div>
<div class="t" style="left:10px;width:25px;text-align:center;top:450px;color:#0000ff">5</div>
<div class="t" style="left:562px;width:67px;text-align:right;top:450px;color:#000">0</div>
<div class="t" style="left:630px;width:67px;text-align:right;top:450px;color:#000">0.00</div>
<div class="t" style="left:698px;width:89px;text-align:right;top:450px;color:#000">0.00</div>
<div class="t" style="left:788px;width:67px;text-align:right;top:450px;color:#000">0</div>
<div class="t" style="left:856px;width:61px;text-align:right;top:450px;color:#000">0</div>
<div class="a" style="left:10px;top:467px;width:1049px;height:24px;background:#f4f9ff"></div>
<div class="a" style="left:10px;top:491px;width:1049px;height:1px;background:#80a8e4"></div>
<div class="t" style="left:10px;width:25px;text-align:center;top:474px;color:#0000ff">6</div>
<div class="t" style="left:562px;width:67px;text-align:right;top:474px;color:#000">0</div>
<div class="t" style="left:630px;width:67px;text-align:right;top:474px;color:#000">0.00</div>
<div class="t" style="left:698px;width:89px;text-align:right;top:474px;color:#000">0.00</div>
<div class="t" style="left:788px;width:67px;text-align:right;top:474px;color:#000">0</div>
<div class="t" style="left:856px;width:61px;text-align:right;top:474px;color:#000">0</div>
<div class="a" style="left:10px;top:515px;width:1049px;height:1px;background:#80a8e4"></div>
<div class="t" style="left:10px;width:25px;text-align:center;top:498px;color:#0000ff">7</div>
<div class="t" style="left:562px;width:67px;text-align:right;top:498px;color:#000">0</div>
<div class="t" style="left:630px;width:67px;text-align:right;top:498px;color:#000">0.00</div>
<div class="t" style="left:698px;width:89px;text-align:right;top:498px;color:#000">0.00</div>
<div class="t" style="left:788px;width:67px;text-align:right;top:498px;color:#000">0</div>
<div class="t" style="left:856px;width:61px;text-align:right;top:498px;color:#000">0</div>
<div class="a" style="left:10px;top:515px;width:1049px;height:24px;background:#f4f9ff"></div>
<div class="a" style="left:10px;top:539px;width:1049px;height:1px;background:#80a8e4"></div>
<div class="t" style="left:10px;width:25px;text-align:center;top:522px;color:#0000ff">8</div>
<div class="t" style="left:562px;width:67px;text-align:right;top:522px;color:#000">0</div>
<div class="t" style="left:630px;width:67px;text-align:right;top:522px;color:#000">0.00</div>
<div class="t" style="left:698px;width:89px;text-align:right;top:522px;color:#000">0.00</div>
<div class="t" style="left:788px;width:67px;text-align:right;top:522px;color:#000">0</div>
<div class="t" style="left:856px;width:61px;text-align:right;top:522px;color:#000">0</div>
<div class="a" style="left:10px;top:563px;width:1049px;height:1px;background:#80a8e4"></div>
<div class="t" style="left:10px;width:25px;text-align:center;top:546px;color:#0000ff">9</div>
<div class="t" style="left:562px;width:67px;text-align:right;top:546px;color:#000">0</div>
<div class="t" style="left:630px;width:67px;text-align:right;top:546px;color:#000">0.00</div>
<div class="t" style="left:698px;width:89px;text-align:right;top:546px;color:#000">0.00</div>
<div class="t" style="left:788px;width:67px;text-align:right;top:546px;color:#000">0</div>
<div class="t" style="left:856px;width:61px;text-align:right;top:546px;color:#000">0</div>
<div class="a" style="left:10px;top:563px;width:1049px;height:24px;background:#f4f9ff"></div>
<div class="a" style="left:10px;top:587px;width:1049px;height:1px;background:#80a8e4"></div>
<div class="t" style="left:10px;width:25px;text-align:center;top:570px;color:#0000ff">10</div>
<div class="t" style="left:562px;width:67px;text-align:right;top:570px;color:#000">0</div>
<div class="t" style="left:630px;width:67px;text-align:right;top:570px;color:#000">0.00</div>
<div class="t" style="left:698px;width:89px;text-align:right;top:570px;color:#000">0.00</div>
<div class="t" style="left:788px;width:67px;text-align:right;top:570px;color:#000">0</div>
<div class="t" style="left:856px;width:61px;text-align:right;top:570px;color:#000">0</div>
<div class="a" style="left:10px;top:611px;width:1049px;height:1px;background:#80a8e4"></div>
<div class="t" style="left:10px;width:25px;text-align:center;top:594px;color:#0000ff">11</div>
<div class="t" style="left:562px;width:67px;text-align:right;top:594px;color:#000">0</div>
<div class="t" style="left:630px;width:67px;text-align:right;top:594px;color:#000">0.00</div>
<div class="t" style="left:698px;width:89px;text-align:right;top:594px;color:#000">0.00</div>
<div class="t" style="left:788px;width:67px;text-align:right;top:594px;color:#000">0</div>
<div class="t" style="left:856px;width:61px;text-align:right;top:594px;color:#000">0</div>
<div class="a" style="left:10px;top:611px;width:1049px;height:24px;background:#f4f9ff"></div>
<div class="a" style="left:10px;top:635px;width:1049px;height:1px;background:#80a8e4"></div>
<div class="t" style="left:10px;width:25px;text-align:center;top:618px;color:#0000ff">12</div>
<div class="t" style="left:562px;width:67px;text-align:right;top:618px;color:#000">0</div>
<div class="t" style="left:630px;width:67px;text-align:right;top:618px;color:#000">0.00</div>
<div class="t" style="left:698px;width:89px;text-align:right;top:618px;color:#000">0.00</div>
<div class="t" style="left:788px;width:67px;text-align:right;top:618px;color:#000">0</div>
<div class="t" style="left:856px;width:61px;text-align:right;top:618px;color:#000">0</div>
<div class="a" style="left:10px;top:659px;width:1049px;height:1px;background:#80a8e4"></div>
<div class="t" style="left:10px;width:25px;text-align:center;top:642px;color:#0000ff">13</div>
<div class="t" style="left:562px;width:67px;text-align:right;top:642px;color:#000">0</div>
<div class="t" style="left:630px;width:67px;text-align:right;top:642px;color:#000">0.00</div>
<div class="t" style="left:698px;width:89px;text-align:right;top:642px;color:#000">0.00</div>
<div class="t" style="left:788px;width:67px;text-align:right;top:642px;color:#000">0</div>
<div class="t" style="left:856px;width:61px;text-align:right;top:642px;color:#000">0</div>
<div class="a" style="left:35px;top:324px;width:1px;height:336px;background:#80a8e4"></div>
<div class="a" style="left:157px;top:324px;width:1px;height:336px;background:#80a8e4"></div>
<div class="a" style="left:334px;top:324px;width:1px;height:336px;background:#80a8e4"></div>
<div class="a" style="left:369px;top:324px;width:1px;height:336px;background:#80a8e4"></div>
<div class="a" style="left:448px;top:324px;width:1px;height:336px;background:#80a8e4"></div>
<div class="a" style="left:505px;top:324px;width:1px;height:336px;background:#80a8e4"></div>
<div class="a" style="left:562px;top:324px;width:1px;height:336px;background:#80a8e4"></div>
<div class="a" style="left:630px;top:324px;width:1px;height:336px;background:#80a8e4"></div>
<div class="a" style="left:698px;top:324px;width:1px;height:336px;background:#80a8e4"></div>
<div class="a" style="left:788px;top:324px;width:1px;height:336px;background:#80a8e4"></div>
<div class="a" style="left:856px;top:324px;width:1px;height:336px;background:#80a8e4"></div>
<div class="a" style="left:918px;top:324px;width:1px;height:336px;background:#80a8e4"></div>
<div class="a" style="left:1008px;top:324px;width:1px;height:336px;background:#80a8e4"></div>
<div class="a" style="left:1059px;top:324px;width:1px;height:336px;background:#80a8e4"></div>
<div class="a" style="left:10px;top:674px;width:1560px;height:26px;background:#adc9ee"></div>
<div class="t" style="left:77px;top:682px;color:#800000;font-weight:bold">合计<span class="c">:</span></div>
<div class="t" style="left:562px;width:67px;text-align:right;top:682px;color:#800000;font-weight:bold">0</div>
<div class="t" style="left:698px;width:89px;text-align:right;top:682px;color:#800000;font-weight:bold">0.00</div>
<div class="a" style="left:10px;top:700px;width:1560px;height:17px;background-color:#fcfcfc;background-image:linear-gradient(45deg,#f0f0f0 25%,transparent 25%,transparent 75%,#f0f0f0 75%),linear-gradient(45deg,#f0f0f0 25%,transparent 25%,transparent 75%,#ececec 75%);background-size:2px 2px;background-position:0 0,1px 1px"></div>
<div class="a" style="left:10px;top:700px;width:10px;height:17px;background:#6b6b6b"></div>
<div class="a" style="left:20px;top:700px;width:17px;height:17px;background:#f0f0f0;box-shadow:inset 1px 1px 0 #fff, inset -1px -1px 0 #696969, inset -2px -2px 0 #a0a0a0"></div>
<svg style="left:24px;top:704px" width="8" height="9" viewBox="0 0 8 9"><path d="M5 0 L1 4 L5 8Z" fill="#000"/></svg>
<div class="a" style="left:37px;top:700px;width:945px;height:17px;background:#f0f0f0;box-shadow:inset 1px 1px 0 #fff, inset -1px -1px 0 #696969, inset -2px -2px 0 #a0a0a0"></div>
<div class="a" style="left:1553px;top:700px;width:17px;height:17px;background:#f0f0f0;box-shadow:inset 1px 1px 0 #fff, inset -1px -1px 0 #696969, inset -2px -2px 0 #a0a0a0"></div>
<svg style="left:1559px;top:704px" width="8" height="9" viewBox="0 0 8 9"><path d="M1 0 L5 4 L1 8Z" fill="#000"/></svg>
<div class="a" style="left:1570px;top:700px;width:16px;height:17px;background:#c8c8c8"></div>
<div class="a" style="left:1570px;top:323px;width:16px;height:377px;background-color:#fcfcfc;background-image:linear-gradient(45deg,#f0f0f0 25%,transparent 25%,transparent 75%,#f0f0f0 75%),linear-gradient(45deg,#f0f0f0 25%,transparent 25%,transparent 75%,#ececec 75%);background-size:2px 2px;background-position:0 0,1px 1px"></div>
<div class="a" style="left:1570px;top:323px;width:16px;height:17px;background:#f0f0f0;box-shadow:inset 1px 1px 0 #fff, inset -1px -1px 0 #696969, inset -2px -2px 0 #a0a0a0"></div>
<svg style="left:1574px;top:328px" width="10" height="6" viewBox="0 0 10 6"><path d="M0 5 L4.5 0.5 L9 5Z" fill="#000"/></svg>
<div class="a" style="left:1570px;top:340px;width:16px;height:150px;background:#f0f0f0;box-shadow:inset 1px 1px 0 #fff, inset -1px -1px 0 #696969, inset -2px -2px 0 #a0a0a0"></div>
<div class="a" style="left:1570px;top:683px;width:16px;height:17px;background:#f0f0f0;box-shadow:inset 1px 1px 0 #fff, inset -1px -1px 0 #696969, inset -2px -2px 0 #a0a0a0"></div>
<svg style="left:1574px;top:689px" width="10" height="6" viewBox="0 0 10 6"><path d="M0 0.5 L4.5 5 L9 0.5Z" fill="#000"/></svg>
<div class="a" style="left:9px;top:725px;width:1579px;height:80px;background:#fff;border:1px solid #6a6a6a"></div>
<div class="t " style="left:19px;top:738px;">应收<span class="c">:</span></div>
<div class="t" style="left:55px;top:737px;color:#000080">0.00</div>
<div class="a" style="left:55px;top:751px;width:139px;height:1px;background:#000"></div>
<div class="t " style="left:258px;top:738px;color:#ff0000">预收定金<span class="c">:</span></div>
<div class="t" style="left:319px;top:737px;color:#ff0000">0.00</div>
<div class="a" style="left:319px;top:751px;width:122px;height:1px;background:#000"></div>
<div class="t " style="left:490px;top:739px;">制单<span class="c">:</span></div>
<div class="t " style="left:521px;top:739px;">管理员</div>
<div class="a" style="left:521px;top:752px;width:84px;height:1px;background:#000"></div>
<div class="t " style="left:670px;top:741px;">审核<span class="c">:</span></div>
<div class="a" style="left:702px;top:754px;width:83px;height:1px;background:#000"></div>
<div class="t " style="left:18px;top:761px;">备注<span class="c">:</span></div>
<div class="a" style="left:54px;top:775px;width:732px;height:1px;background:#000"></div>
<div class="t " style="left:18px;top:786px;">送货<span class="c">:</span></div>
</body></html>
